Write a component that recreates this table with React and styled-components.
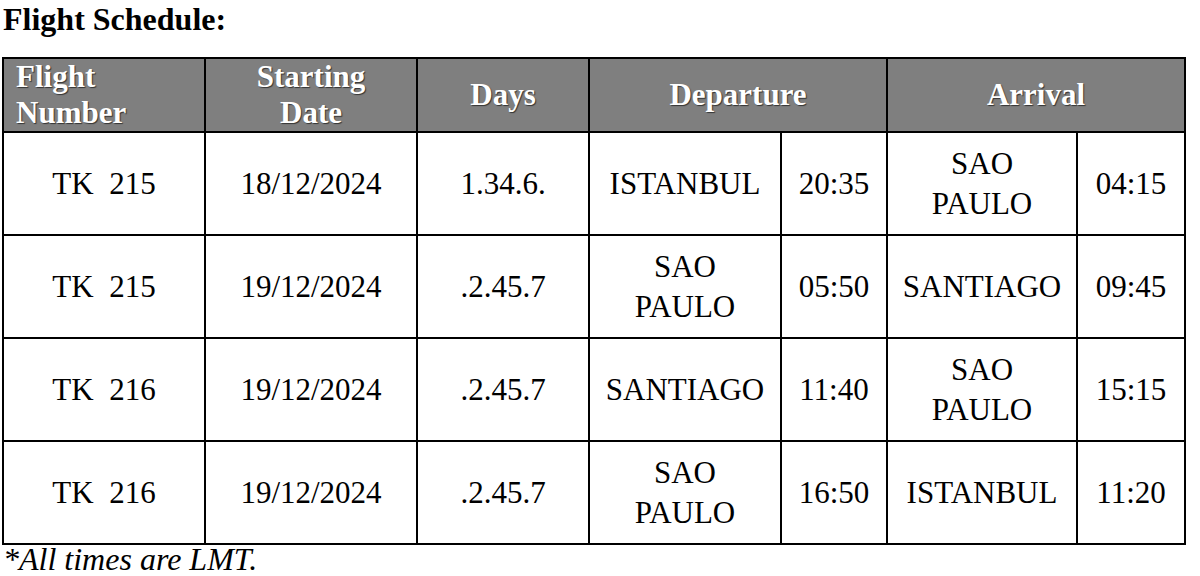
import React from 'react';
import styled, { createGlobalStyle } from 'styled-components';

const SERIF = '"Liberation Serif", "Times New Roman", serif';

const GlobalStyle = createGlobalStyle`
  html, body {
    margin: 0;
    padding: 0;
    background: #ffffff;
    color: #000;
  }
`;

const COLS = [202, 212, 172, 192, 106, 190, 108];

const flights = [
  { no: 'TK  215', date: '18/12/2024', days: '1.34.6.', from: 'ISTANBUL', dep: '20:35', to: 'SAO PAULO', arr: '04:15', toWrap: true },
  { no: 'TK  215', date: '19/12/2024', days: '.2.45.7', from: 'SAO PAULO', dep: '05:50', to: 'SANTIAGO', arr: '09:45', fromWrap: true },
  { no: 'TK  216', date: '19/12/2024', days: '.2.45.7', from: 'SANTIAGO', dep: '11:40', to: 'SAO PAULO', arr: '15:15', toWrap: true },
  { no: 'TK  216', date: '19/12/2024', days: '.2.45.7', from: 'SAO PAULO', dep: '16:50', to: 'ISTANBUL', arr: '11:20', fromWrap: true },
];

const Page = styled.div`
  padding: 0 0 0 2px;
  width: 1190px;
  font-family: ${SERIF};
`;

const Title = styled.h1`
  margin: 0;
  padding: 2px 0 0 1px;
  height: 57px;
  box-sizing: border-box;
  font-family: ${SERIF};
  font-size: 32px;
  font-weight: bold;
  line-height: 34px;
`;

const Table = styled.table`
  border-collapse: collapse;
  table-layout: fixed;
  width: 1182px;
  border: 2px solid #000;
  font-family: ${SERIF};
`;

const HeadCell = styled.th`
  background: #7f7f7f;
  color: #fff;
  height: 70px;
  padding: ${p => (p.$left ? '0 0 0 12px' : '0')};
  text-align: ${p => (p.$left ? 'left' : 'center')};
  font-family: ${SERIF};
  font-size: 31px;
  font-weight: bold;
  line-height: 36px;
  border: 2px solid #000;
  text-shadow: 1px 1px 1px rgba(0, 0, 0, 0.6);
  vertical-align: middle;
`;

const Cell = styled.td`
  height: 101px;
  padding: 0;
  text-align: center;
  vertical-align: middle;
  font-family: ${SERIF};
  font-size: 31px;
  line-height: 40px;
  border: 2px solid #000;
  white-space: pre;
`;

const Stack = styled.span`
  display: block;
`;

const Note = styled.p`
  margin: 0;
  padding: 0 0 0 1px;
  font-family: ${SERIF};
  font-style: italic;
  font-size: 32px;
  line-height: 29px;
`;

const City = ({ name, wrap }) =>
  wrap ? name.split(' ').map(w => <Stack key={w}>{w}</Stack>) : name;

export default function App() {
  return (
    <>
      <GlobalStyle />
      <Page>
        <Title>Flight Schedule:</Title>
        <Table>
          <colgroup>
            {COLS.map((w, i) => (
              <col key={i} style={{ width: w }} />
            ))}
          </colgroup>
          <thead>
            <tr>
              <HeadCell $left>Flight<br />Number</HeadCell>
              <HeadCell>Starting<br />Date</HeadCell>
              <HeadCell>Days</HeadCell>
              <HeadCell colSpan={2}>Departure</HeadCell>
              <HeadCell colSpan={2}>Arrival</HeadCell>
            </tr>
          </thead>
          <tbody>
            {flights.map((f, i) => (
              <tr key={i}>
                <Cell>{f.no}</Cell>
                <Cell>{f.date}</Cell>
                <Cell>{f.days}</Cell>
                <Cell><City name={f.from} wrap={f.fromWrap} /></Cell>
                <Cell>{f.dep}</Cell>
                <Cell><City name={f.to} wrap={f.toWrap} /></Cell>
                <Cell>{f.arr}</Cell>
              </tr>
            ))}
          </tbody>
        </Table>
        <Note>*All times are LMT.</Note>
      </Page>
    </>
  );
}
